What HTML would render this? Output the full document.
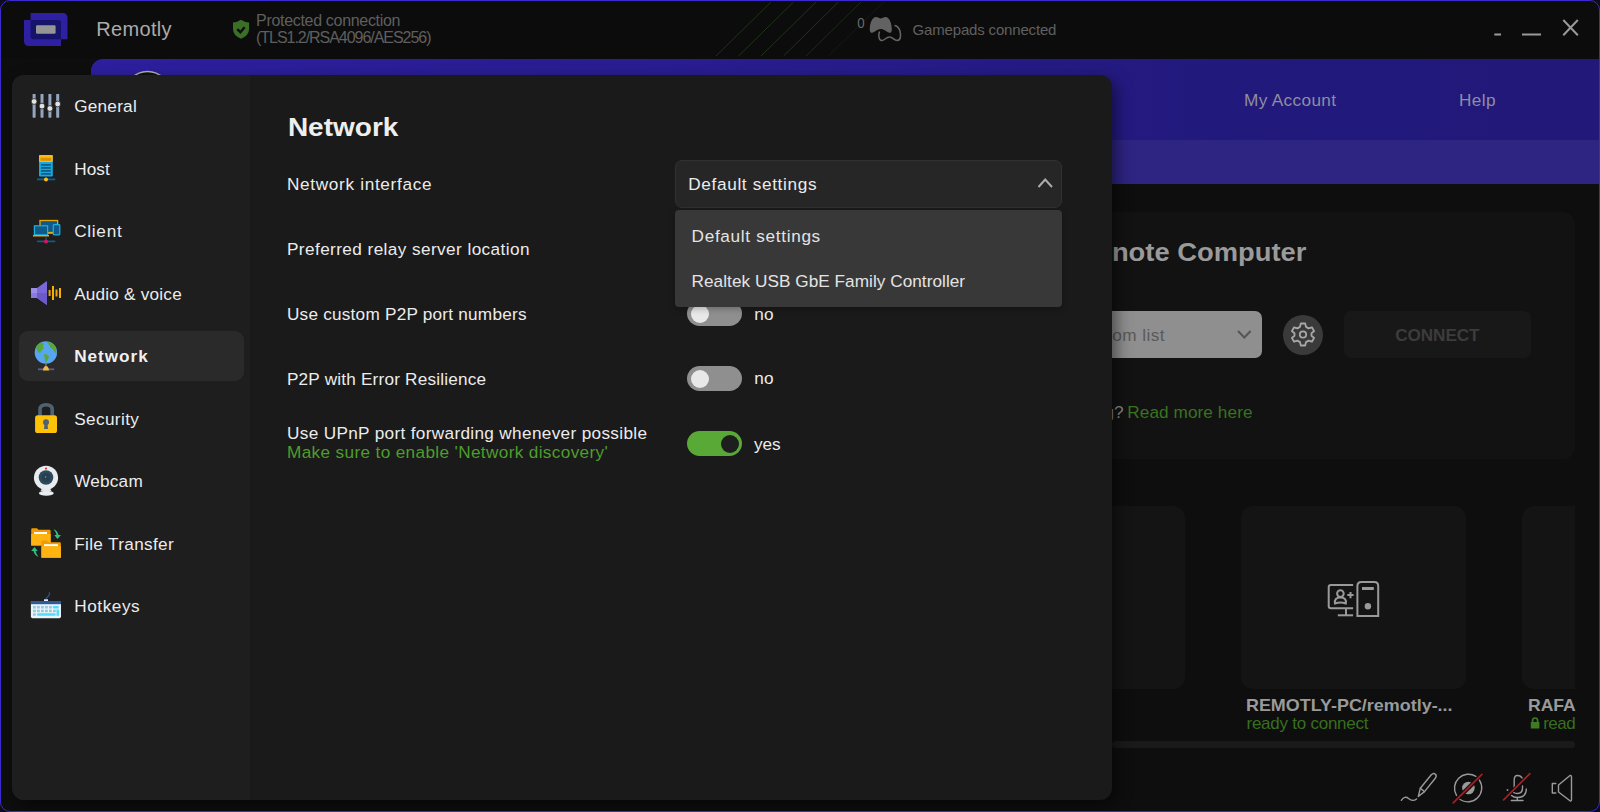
<!DOCTYPE html>
<html><head><meta charset="utf-8"><style>
html,body{margin:0;padding:0;width:1600px;height:812px;overflow:hidden;background:#0d0b1c}
.win{position:absolute;left:0;top:0;width:1600px;height:812px;border-radius:10px;overflow:hidden;background:#0c0c0c}
.frame{position:absolute;left:0;top:0;width:1598px;height:810px;border:1px solid #3b2ad0;border-radius:10px;pointer-events:none}
.abs{position:absolute}
.t{position:absolute;white-space:pre;font-family:"Liberation Sans",sans-serif}
svg{overflow:visible}
</style></head><body>
<div class="win">
<div id="bg"><svg class="abs" style="left:0;top:0" width="1600" height="60">
<rect x="0" y="0" width="1600" height="59" fill="#0c0c0c"/>
<g fill="#2e20a0">
 <path d="M30.6 13 H62.5 Q67.5 13 67.5 18 V39.2 H30.6 Z"/>
 <path d="M24 20 H61 V46 H29 Q24 46 24 41 Z"/>
</g>
<path d="M30.6 20 H58 Q61 20 61 23 V39.2 H33.6 Q30.6 39.2 30.6 36.2 Z" fill="#16136b"/>
<rect x="36" y="25.3" width="19.6" height="8.4" rx="1.2" fill="#959595"/>
<path d="M233 22.6 Q237 22.3 241 19.7 Q245 22.3 249.1 22.6 V29 Q249 35.5 241 38.8 Q233 35.5 233 29 Z" fill="#3b6e26"/>
<path d="M237.3 29.2 L240.4 32.2 L244.6 27.2" stroke="#0c0c0c" stroke-width="2.3" fill="none"/>
<g stroke="#1f3418" stroke-width="1">
 <line x1="716" y1="56" x2="771" y2="2"/>
 <line x1="738.5" y1="56" x2="793.5" y2="2"/>
 <line x1="761" y1="56" x2="816" y2="2"/>
 <line x1="783.5" y1="56" x2="838.5" y2="2"/>
 <line x1="806" y1="56" x2="861" y2="2" stroke="#1a2a16"/>
 <line x1="828.5" y1="56" x2="883.5" y2="2" stroke="#141c12"/>
</g>
<path d="M869.8 30 C869.5 24 872 17 876 17 C878 17 879.5 18.5 880.8 18.5 C882 18.5 883.5 17 885.5 17 C889.5 17 892 24 891.8 30 C891.6 33 889.5 33.5 887.5 32 C885.5 30.5 883 29 880.8 29 C878.5 29 876 30.5 874 32 C872 33.5 870 33 869.8 30 Z" fill="#626262"/>
<path d="M879.5 31.5 C878 36 879 40.5 882 40.5 C884.5 40.5 886 37 889.5 37 C893 37 894 40.5 897 40.5 C901 40.5 901 35 900 31 C899 28 897 25.8 894.5 25.5" stroke="#666" stroke-width="1.5" fill="none"/>
<g stroke="#9a9a9a" stroke-width="2" fill="none">
 <line x1="1494.3" y1="34.5" x2="1501" y2="34.5"/>
 <line x1="1522" y1="34.5" x2="1541" y2="34.5"/>
 <line x1="1563.3" y1="20" x2="1577.8" y2="35.2"/>
 <line x1="1577.8" y1="20" x2="1563.3" y2="35.2"/>
</g>
</svg><div class="t" style="left:96.30px;top:19.00px;font-size:20px;line-height:20px;color:#ababab;font-weight:400;letter-spacing:0.323px;">Remotly</div><div class="t" style="left:256.04px;top:13.00px;font-size:16px;line-height:16px;color:#5f5f5f;font-weight:400;letter-spacing:-0.310px;">Protected connection</div><div class="t" style="left:256.04px;top:29.80px;font-size:16px;line-height:16px;color:#5f5f5f;font-weight:400;letter-spacing:-1.041px;">(TLS1.2/RSA4096/AES256)</div><div class="t" style="left:856.87px;top:15.03px;font-size:15.5px;line-height:15.5px;color:#6a6a6a;font-weight:400;letter-spacing:0.000px;transform:scaleX(0.8575);transform-origin:0.93px 0;">0</div><div class="t" style="left:912.60px;top:22.05px;font-size:15px;line-height:15px;color:#606060;font-weight:400;letter-spacing:-0.172px;">Gamepads connected</div><div class="abs" style="left:0;top:59px;width:1600px;height:753px;background:#0e0e0e"></div>
<div class="abs" style="left:91px;top:59px;width:1509px;height:81px;border-top-left-radius:12px;background:linear-gradient(90deg,#2d1f9e 0%,#281c8c 50%,#22197c 75%,#21187a 100%)"></div>
<div class="abs" style="left:91px;top:140px;width:1509px;height:44px;background:#2e2482"></div>
<svg class="abs" style="left:0;top:0" width="300" height="100"><circle cx="147.5" cy="93.8" r="22.3" stroke="#b0b0b0" stroke-width="1.6" fill="#111"/></svg>
<div class="abs" style="left:900px;top:212px;width:675px;height:247px;border-radius:12px;background:#121212"></div>
<div class="abs" style="left:900px;top:311px;width:362px;height:46.5px;border-radius:7px;background:#8f8f8f"></div>
<div class="abs" style="left:1283px;top:314.5px;width:40px;height:40px;border-radius:50%;background:#3a3a3a"></div>
<div class="abs" style="left:1344px;top:311px;width:186.5px;height:46.5px;border-radius:7px;background:#181818"></div>
<div class="abs" style="left:960px;top:506px;width:225px;height:183px;border-radius:12px;background:#141414"></div>
<div class="abs" style="left:1241px;top:506px;width:225px;height:183px;border-radius:12px;background:#141414"></div>
<div class="abs" style="left:1522px;top:506px;width:53px;height:183px;border-radius:12px 0 0 12px;background:#141414"></div>
<div class="abs" style="left:1112px;top:741px;width:463px;height:7px;border-radius:3.5px;background:#1a1a1a"></div>
<div class="t" style="left:1243.97px;top:92.28px;font-size:17.2px;line-height:17.2px;color:#8e8ea0;font-weight:400;letter-spacing:0.356px;">My Account</div><div class="t" style="left:1458.97px;top:92.28px;font-size:17.2px;line-height:17.2px;color:#8e8ea0;font-weight:400;letter-spacing:0.396px;">Help</div><div class="t" style="left:1111.97px;top:239.53px;font-size:25.5px;line-height:25.5px;color:#9a9a9a;font-weight:700;letter-spacing:0.000px;transform:scaleX(1.0724);transform-origin:1.53px 0;">note Computer</div><div class="t" style="left:1112.27px;top:326.78px;font-size:17.2px;line-height:17.2px;color:#5a5a5a;font-weight:400;letter-spacing:0.429px;">om list</div><div class="t" style="left:1395.27px;top:327.28px;font-size:17.2px;line-height:17.2px;color:#3c3c3c;font-weight:700;letter-spacing:-0.123px;">CONNECT</div><div class="t" style="left:915.24px;top:403.98px;font-size:17.2px;line-height:17.2px;color:#8a8a8a;font-weight:400;letter-spacing:0.000px;">Having trouble connecting?</div><div class="t" style="left:1127.27px;top:403.98px;font-size:17.2px;line-height:17.2px;color:#397320;font-weight:400;letter-spacing:0.080px;">Read more here</div><div class="t" style="left:1246.48px;top:697.45px;font-size:17px;line-height:17px;color:#9a9a9a;font-weight:700;letter-spacing:0.000px;transform:scaleX(1.0549);transform-origin:1.02px 0;">REMOTLY-PC/remotly-...</div><div class="t" style="left:1246.48px;top:715.15px;font-size:17px;line-height:17px;color:#386f1f;font-weight:400;letter-spacing:-0.245px;">ready to connect</div><div class="t" style="left:1527.78px;top:697.45px;font-size:17px;line-height:17px;color:#9a9a9a;font-weight:700;letter-spacing:0.000px;transform:scaleX(1.0324);transform-origin:1.02px 0;">RAFA</div><div class="t" style="left:1543.28px;top:714.75px;font-size:17px;line-height:17px;color:#386f1f;font-weight:400;letter-spacing:-0.567px;">read</div><svg class="abs" style="left:0;top:0" width="1600" height="812">
<path d="M1238 331 L1244.3 337.5 L1250.6 331" stroke="#555" stroke-width="2" fill="none"/>
<g transform="translate(1303 334.5)" stroke="#a8a8a8" stroke-width="1.8" fill="none">
 <circle r="3.2"/>
 <path d="M-2.2 -11 L2.2 -11 L3 -7.6 L5.6 -6.1 L8.9 -7.2 L11.1 -3.4 L8.5 -1.2 L8.5 1.2 L11.1 3.4 L8.9 7.2 L5.6 6.1 L3 7.6 L2.2 11 L-2.2 11 L-3 7.6 L-5.6 6.1 L-8.9 7.2 L-11.1 3.4 L-8.5 1.2 L-8.5 -1.2 L-11.1 -3.4 L-8.9 -7.2 L-5.6 -6.1 L-3 -7.6 Z" stroke-linejoin="round"/>
</g>
<g stroke="#9a9a9a" stroke-width="2" fill="none">
 <path d="M1353.1 585 H1331 Q1328.7 585 1328.7 587.3 V606 Q1328.7 608.3 1331 608.3 H1353.1"/>
 <line x1="1346" y1="608.3" x2="1346" y2="615"/>
 <line x1="1337.8" y1="615.3" x2="1353.1" y2="615.3"/>
 <circle cx="1340.4" cy="593.6" r="3.3"/>
 <path d="M1335 603.5 Q1334 597.5 1340.4 597.5 Q1346.8 597.5 1345.8 603.5 Q1340.4 601.5 1335 603.5 Z"/>
 <path d="M1347.3 595 H1353.6 M1350.5 592 V598.2"/>
 <path d="M1357.4 616 V586 Q1357.4 582 1361.4 582 H1374.2 Q1378.2 582 1378.2 586 V616 Z"/>
</g>
<rect x="1362" y="587" width="11.8" height="3" fill="#9a9a9a"/>
<circle cx="1367.9" cy="606.2" r="3.2" fill="#9a9a9a"/>
<path d="M1532.6 722.5 V720.5 Q1532.6 718 1535.1 718 Q1537.6 718 1537.6 720.5 V722.5" stroke="#3e7a22" stroke-width="1.7" fill="none"/>
<rect x="1530.8" y="721.9" width="8.6" height="6.7" rx="0.6" fill="#3e7a22"/>
<g stroke="#9a9a9a" stroke-width="1.4" fill="none" stroke-linecap="round" stroke-linejoin="round">
 <path d="M1418.3 796.5 L1420.3 788.3 L1431.3 774.8 Q1433.5 772.5 1435.5 774.3 Q1437 776 1435.3 778.3 L1424.5 791.6 Z"/>
 <line x1="1420.3" y1="788.3" x2="1424.5" y2="791.6"/>
 <path d="M1401.3 800.3 Q1405 795.3 1408.5 798.5 Q1412.5 802 1416.6 799"/>
 <path d="M1475.9 776.3 A14 14 0 0 0 1456.5 795.4"/>
 <path d="M1479.4 780.1 A14 14 0 0 1 1460 799.5"/>
 <path d="M1514.2 789.5 V780.3 Q1514.2 775.5 1517.3 775.5 Q1521 775.5 1522 778"/>
 <path d="M1522.5 786 V788 Q1522.5 793.5 1517.3 793.5 Q1515 793.5 1513.8 792.5"/>
 <path d="M1526.3 789 Q1526.3 797.5 1517.3 797.5 Q1513.5 797.5 1511.5 795.5"/>
 <path d="M1517.3 797.5 V800.5 M1511.3 800.5 H1523"/>
 <path d="M1555.8 783.5 H1552.3 V793 H1555.8"/>
 <path d="M1558.5 785 L1570 775.5 Q1571.5 775 1571.5 777 V799.5 Q1571.5 801.5 1570 800.8 L1558.5 792 Z"/>
</g>
<g fill="#9a9a9a">
 <circle cx="1468.4" cy="788" r="6.3"/>
 <circle cx="1507.5" cy="790" r="0.9"/>
</g>
<line x1="1461" y1="795.3" x2="1476" y2="780.5" stroke="#0e0e0e" stroke-width="4.2"/>
<line x1="1513" y1="790.5" x2="1522" y2="781.5" stroke="#0e0e0e" stroke-width="3.6"/>
<g stroke="#a02228" stroke-width="1.7">
 <line x1="1452.7" y1="803.3" x2="1482.4" y2="773.9"/>
 <line x1="1503.1" y1="800.4" x2="1530.4" y2="773.1"/>
</g>
</svg></div>
<div class="abs" style="left:12px;top:75px;width:1100px;height:725px;border-radius:12px;background:#1a1a1a;box-shadow:4px 6px 16px 0px rgba(0,0,0,0.5);overflow:hidden">
 <div class="abs" style="left:0;top:0;width:238px;height:725px;background:#1e1e1e"></div>
</div>
<div class="abs" style="left:19px;top:331px;width:225px;height:50px;border-radius:9px;background:#2a2a2a"></div>
<div class="t" style="left:74.17px;top:97.98px;font-size:17.2px;line-height:17.2px;color:#ececec;font-weight:400;letter-spacing:0.232px;">General</div><div class="t" style="left:74.17px;top:161.18px;font-size:17.2px;line-height:17.2px;color:#ececec;font-weight:400;letter-spacing:0.068px;">Host</div><div class="t" style="left:74.17px;top:223.48px;font-size:17.2px;line-height:17.2px;color:#ececec;font-weight:400;letter-spacing:0.719px;">Client</div><div class="t" style="left:74.17px;top:285.98px;font-size:17.2px;line-height:17.2px;color:#ececec;font-weight:400;letter-spacing:0.203px;">Audio &amp; voice</div><div class="t" style="left:74.17px;top:347.78px;font-size:17.2px;line-height:17.2px;color:#f0f0f0;font-weight:700;letter-spacing:0.956px;">Network</div><div class="t" style="left:74.17px;top:411.18px;font-size:17.2px;line-height:17.2px;color:#ececec;font-weight:400;letter-spacing:0.379px;">Security</div><div class="t" style="left:74.17px;top:473.48px;font-size:17.2px;line-height:17.2px;color:#ececec;font-weight:400;letter-spacing:0.210px;">Webcam</div><div class="t" style="left:74.17px;top:535.58px;font-size:17.2px;line-height:17.2px;color:#ececec;font-weight:400;letter-spacing:0.336px;">File Transfer</div><div class="t" style="left:74.17px;top:597.98px;font-size:17.2px;line-height:17.2px;color:#ececec;font-weight:400;letter-spacing:0.576px;">Hotkeys</div><svg class="abs" style="left:0;top:0" width="260" height="640">
<g fill="#94a6bf">
 <rect x="32.6" y="94" width="3" height="23.7" rx="0.6"/>
 <rect x="40.5" y="94" width="3" height="23.7" rx="0.6"/>
 <rect x="48.4" y="94" width="3" height="23.7" rx="0.6"/>
 <rect x="56.2" y="94" width="3" height="23.7" rx="0.6"/>
</g>
<g fill="#e2e2e2" stroke="#1f1f1f" stroke-width="0.8">
 <circle cx="34.1" cy="101.5" r="2.9"/>
 <circle cx="42" cy="106.1" r="2.9"/>
 <circle cx="49.9" cy="108.5" r="2.9"/>
 <circle cx="57.7" cy="104" r="2.9"/>
</g>
<!-- host -->
<rect x="39" y="155" width="13.8" height="21.6" rx="1" fill="#18a8d8"/>
<rect x="39" y="155" width="13.8" height="7" rx="1" fill="#ffb90f"/>
<rect x="40.5" y="157.8" width="10.8" height="3" fill="#d99200"/>
<g fill="#0f5d8c"><rect x="41" y="164" width="9.8" height="1.8"/><rect x="41" y="167" width="9.8" height="1.8"/><rect x="41" y="170" width="9.8" height="1.8"/><rect x="41" y="173" width="9.8" height="1.8"/></g>
<rect x="37" y="178.5" width="18.3" height="1.8" fill="#0c5e96"/>
<rect x="45.4" y="176.5" width="1.2" height="2" fill="#0c5e96"/>
<circle cx="46" cy="179.4" r="2" fill="#ffb90f"/>
<!-- client -->
<rect x="40" y="220.5" width="17.6" height="12" fill="#0e5a8a" stroke="#f0a800" stroke-width="1.3"/>
<rect x="44" y="232.5" width="9" height="1.3" fill="#f0a800"/>
<rect x="34.4" y="225.8" width="13.2" height="9" fill="#0e5a8a" stroke="#1ab0e0" stroke-width="1.2"/>
<rect x="33" y="235" width="16" height="1.5" fill="#f0a800"/>
<rect x="53.3" y="224.6" width="6.5" height="10.2" rx="0.8" fill="#0e5a8a" stroke="#1ab0e0" stroke-width="1.2"/>
<rect x="45.4" y="236.5" width="1.2" height="4" fill="#0c5e96"/>
<rect x="37" y="240.6" width="18.3" height="1.6" fill="#0c5e96"/>
<circle cx="46" cy="241.4" r="2" fill="#e01060"/>
<!-- audio -->
<path d="M31 288 H37 V298 H31 Z" fill="#8a7ae0"/>
<path d="M31 288 H37 V293 H31 Z" fill="#9d8fe8"/>
<path d="M37 288 L46.5 281.3 Q47 281 47 281.8 V304.2 Q47 305 46.5 304.7 L37 298 Z" fill="#7a68d8"/>
<path d="M37 293 H47 V304.2 Q47 305 46.5 304.7 L37 298 Z" fill="#6c5acb"/>
<g stroke-width="2"><line x1="49.6" y1="290" x2="49.6" y2="296" stroke="#f5a300"/><line x1="53" y1="286" x2="53" y2="300" stroke="#f5b000"/><line x1="56.5" y1="289.5" x2="56.5" y2="296.5" stroke="#f5a300"/><line x1="60" y1="288" x2="60" y2="298" stroke="#f5b000"/></g>
<!-- globe -->
<circle cx="45.9" cy="352.5" r="11.2" fill="#58a6f0"/>
<path d="M36 347 Q38 343 42 342.5 L44 344 Q42 346 44 348 Q41 350 40 353 Q37 352 36 347 Z" fill="#58a838"/>
<path d="M47 342 Q52 342 55 346 Q56.5 350 56.8 354 Q54 352 52.5 349 Q50 348 49 345 Z" fill="#58a838"/>
<path d="M44 354 Q48 354 49 357 Q47 361 46 363 Q44.5 360 44.5 357 Z" fill="#58a838"/>
<rect x="45.2" y="363.5" width="1.4" height="3" fill="#707890"/>
<rect x="38" y="368.4" width="16.2" height="1.8" fill="#5c6080"/>
<path d="M42.9 370.5 Q43.5 366 46 366 Q48.5 366 49 370.5 Z" fill="#f0b848"/>
<!-- lock -->
<path d="M40 415.5 V409.5 Q40 404.8 46.1 404.8 Q52.2 404.8 52.2 409.5 V415.5" stroke="#4e6272" stroke-width="3.6" fill="none"/>
<rect x="35.1" y="415.3" width="21.9" height="17.7" rx="2.6" fill="#ffc107"/>
<circle cx="46" cy="422.3" r="3" fill="#4e6272"/>
<path d="M44.6 423 L47.4 423 L48 429 L44 429 Z" fill="#4e6272"/>
<!-- webcam -->
<path d="M42 488.5 L50 488.5 L51.5 491 L40.5 491 Z" fill="#dfe3e6"/>
<ellipse cx="46.3" cy="493.2" rx="7.4" ry="2.5" fill="#e8ecef"/>
<circle cx="46" cy="477.8" r="12.1" fill="#e8ecef"/>
<circle cx="46" cy="477.5" r="7.3" fill="#2c4a5c"/>
<circle cx="46" cy="477.5" r="4.5" fill="#26404f"/>
<circle cx="45.6" cy="477" r="0.7" fill="#90a0a8"/>
<circle cx="46" cy="468.6" r="1.1" fill="#e53935"/>
<!-- file transfer -->
<path d="M31.2 529.5 Q31.2 528.2 32.4 528.2 H37 L38.5 529.8 H49.5 Q50.6 529.8 50.6 531 V545.5 H31.2 Z" fill="#f29a00"/>
<rect x="34" y="532" width="13" height="2.2" fill="#ffffff"/>
<rect x="31.2" y="534" width="19.4" height="11.5" fill="#ffb411"/>
<path d="M41.4 542 Q41.4 540.6 42.6 540.6 H47 L48.5 542.2 H59.7 Q60.9 542.2 60.9 543.4 V557.7 H41.4 Z" fill="#f29a00"/>
<rect x="44" y="544.2" width="14" height="2.2" fill="#ffffff"/>
<rect x="41.4" y="546.2" width="19.5" height="11.5" fill="#ffb411"/>
<path d="M53.5 529.3 Q57.5 530.5 58.5 535 L60.9 535 L57.5 539 L54.3 535 L56.5 535 Q56 532 53.5 529.3 Z" fill="#2ec27e"/>
<path d="M38.5 556.8 Q34.5 555.5 33.5 551 L31.2 551 L34.5 547 L37.7 551 L35.6 551 Q36 554 38.5 556.8 Z" fill="#2ec27e"/>
<!-- keyboard -->
<path d="M49.4 592.3 Q50 595 48 596.5 Q46.5 597.5 46 599.5" stroke="#2d5590" stroke-width="1.3" fill="none"/>
<rect x="44" y="599.3" width="4" height="2" fill="#e8f0f8"/>
<path d="M30.9 601 H61 V616.5 Q61 618.2 59.3 618.2 H32.6 Q30.9 618.2 30.9 616.5 Z" fill="#e6f4fc"/>
<rect x="30.9" y="601" width="30.1" height="3.2" fill="#2f5b9c"/>
<g fill="#9cc8dc">
 <rect x="33" y="606" width="2.8" height="2.5"/><rect x="37" y="606" width="2.8" height="2.5"/><rect x="41" y="606" width="2.8" height="2.5"/><rect x="45" y="606" width="2.8" height="2.5"/><rect x="49" y="606" width="2.8" height="2.5"/>
 <rect x="33" y="609.7" width="2.8" height="2.5"/><rect x="37" y="609.7" width="2.8" height="2.5"/><rect x="41" y="609.7" width="2.8" height="2.5"/><rect x="45" y="609.7" width="2.8" height="2.5"/><rect x="49" y="609.7" width="2.8" height="2.5"/><rect x="53" y="609.7" width="2.8" height="2.5"/>
 <rect x="33" y="613.3" width="2.8" height="2.5"/>
</g>
<g fill="#55dcf8">
 <rect x="52.8" y="606" width="6" height="2.5" rx="1"/>
 <rect x="37" y="613.3" width="18.8" height="2.5" rx="1.2"/>
 <rect x="56.5" y="609.5" width="2.5" height="6.3"/>
</g>
</svg><div class="t" style="left:287.94px;top:114.10px;font-size:26px;line-height:26px;color:#eeeeee;font-weight:700;letter-spacing:0.000px;transform:scaleX(1.0774);transform-origin:1.56px 0;">Network</div><div class="t" style="left:286.97px;top:175.98px;font-size:17.2px;line-height:17.2px;color:#ececec;font-weight:400;letter-spacing:0.676px;">Network interface</div><div class="t" style="left:286.97px;top:241.18px;font-size:17.2px;line-height:17.2px;color:#ececec;font-weight:400;letter-spacing:0.411px;">Preferred relay server location</div><div class="t" style="left:286.97px;top:306.18px;font-size:17.2px;line-height:17.2px;color:#ececec;font-weight:400;letter-spacing:0.224px;">Use custom P2P port numbers</div><div class="t" style="left:286.97px;top:370.78px;font-size:17.2px;line-height:17.2px;color:#ececec;font-weight:400;letter-spacing:0.187px;">P2P with Error Resilience</div><div class="t" style="left:286.97px;top:425.08px;font-size:17.2px;line-height:17.2px;color:#ececec;font-weight:400;letter-spacing:0.331px;">Use UPnP port forwarding whenever possible</div><div class="t" style="left:286.97px;top:443.88px;font-size:17.2px;line-height:17.2px;color:#4e9d2c;font-weight:400;letter-spacing:0.352px;">Make sure to enable 'Network discovery'</div><div class="abs" style="left:687px;top:301px;width:55px;height:25px;border-radius:12.5px;background:#8f8f8f"></div><div class="abs" style="left:691px;top:304.5px;width:18px;height:18px;border-radius:50%;background:#e8e8e8"></div><div class="abs" style="left:687px;top:366px;width:55px;height:25px;border-radius:12.5px;background:#8f8f8f"></div><div class="abs" style="left:691px;top:369.5px;width:18px;height:18px;border-radius:50%;background:#e8e8e8"></div><div class="abs" style="left:687px;top:431px;width:55px;height:25px;border-radius:12.5px;background:#59a936"></div><div class="abs" style="left:721.3px;top:434.5px;width:18px;height:18px;border-radius:50%;background:#1e1e1e"></div><div class="t" style="left:754.37px;top:306.48px;font-size:17.2px;line-height:17.2px;color:#ececec;font-weight:400;letter-spacing:0.000px;">no</div><div class="t" style="left:754.37px;top:369.98px;font-size:17.2px;line-height:17.2px;color:#ececec;font-weight:400;letter-spacing:0.000px;">no</div><div class="t" style="left:753.97px;top:435.98px;font-size:17.2px;line-height:17.2px;color:#ececec;font-weight:400;letter-spacing:0.000px;">yes</div><div class="abs" style="left:675px;top:160px;width:385px;height:45.5px;border-radius:7px;background:#262626;border:1px solid #313131"></div>
<svg class="abs" style="left:0;top:0" width="1100" height="200"><path d="M1038.5 187 L1045.2 179.5 L1052 187" stroke="#acacac" stroke-width="2" fill="none"/></svg>
<div class="abs" style="left:675px;top:210px;width:387px;height:96.5px;border-radius:4px;background:#383838;box-shadow:0 2px 6px rgba(0,0,0,0.25)"></div>
<div class="t" style="left:688.27px;top:175.78px;font-size:17.2px;line-height:17.2px;color:#ececec;font-weight:400;letter-spacing:0.652px;">Default settings</div><div class="t" style="left:691.57px;top:228.08px;font-size:17.2px;line-height:17.2px;color:#e4e4e4;font-weight:400;letter-spacing:0.679px;">Default settings</div><div class="t" style="left:691.57px;top:273.18px;font-size:17.2px;line-height:17.2px;color:#e4e4e4;font-weight:400;letter-spacing:0.041px;">Realtek USB GbE Family Controller</div>
</div>
<div class="frame"></div>
</body></html>
